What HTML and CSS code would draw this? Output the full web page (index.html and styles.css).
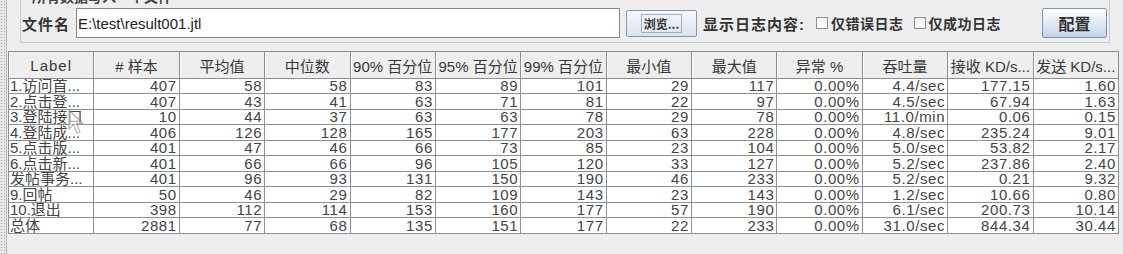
FILE: index.html
```html
<!DOCTYPE html>
<html lang="zh-CN">
<head>
    <meta charset="UTF-8">
    <title>聚合报告</title>
    <link rel="stylesheet" href="styles.css">
</head>
<body>
    <div class="window">
        <div class="grip"></div>
        <div class="main">
            <div class="file-panel">
                <span class="panel-title">所有数据写入一个文件</span>
                <label class="field-label" for="file">文件名</label>
                <input class="file-input" id="file" type="text" value="E:\test\result001.jtl">
                <button class="browse"><span>浏览...</span></button>
                <span class="log-label">显示日志内容:</span>
                <label class="check"><span class="box"></span>仅错误日志</label>
                <label class="check"><span class="box"></span>仅成功日志</label>
                <button class="config">配置</button>
            </div>

            <div class="table-wrap">
                <table class="report">
                    <thead>
                        <tr>
                            <th>Label</th>
                            <th># 样本</th>
                            <th>平均值</th>
                            <th>中位数</th>
                            <th>90% 百分位</th>
                            <th>95% 百分位</th>
                            <th>99% 百分位</th>
                            <th>最小值</th>
                            <th>最大值</th>
                            <th>异常 %</th>
                            <th>吞吐量</th>
                            <th>接收 KD/s...</th>
                            <th>发送 KD/s...</th>
                        </tr>
                    </thead>
                    <tbody>
                        <tr><td>1.访问首...</td><td>407</td><td>58</td><td>58</td><td>83</td><td>89</td><td>101</td><td>29</td><td>117</td><td>0.00%</td><td>4.4/sec</td><td>177.15</td><td>1.60</td></tr>
                        <tr><td>2.点击登...</td><td>407</td><td>43</td><td>41</td><td>63</td><td>71</td><td>81</td><td>22</td><td>97</td><td>0.00%</td><td>4.5/sec</td><td>67.94</td><td>1.63</td></tr>
                        <tr><td>3.登陆接口</td><td>10</td><td>44</td><td>37</td><td>63</td><td>63</td><td>78</td><td>29</td><td>78</td><td>0.00%</td><td>11.0/min</td><td>0.06</td><td>0.15</td></tr>
                        <tr><td>4.登陆成...</td><td>406</td><td>126</td><td>128</td><td>165</td><td>177</td><td>203</td><td>63</td><td>228</td><td>0.00%</td><td>4.8/sec</td><td>235.24</td><td>9.01</td></tr>
                        <tr><td>5.点击版...</td><td>401</td><td>47</td><td>46</td><td>66</td><td>73</td><td>85</td><td>23</td><td>104</td><td>0.00%</td><td>5.0/sec</td><td>53.82</td><td>2.17</td></tr>
                        <tr><td>6.点击新...</td><td>401</td><td>66</td><td>66</td><td>96</td><td>105</td><td>120</td><td>33</td><td>127</td><td>0.00%</td><td>5.2/sec</td><td>237.86</td><td>2.40</td></tr>
                        <tr><td>发帖事务...</td><td>401</td><td>96</td><td>93</td><td>131</td><td>150</td><td>190</td><td>46</td><td>233</td><td>0.00%</td><td>5.2/sec</td><td>0.21</td><td>9.32</td></tr>
                        <tr><td>9.回帖</td><td>50</td><td>46</td><td>29</td><td>82</td><td>109</td><td>143</td><td>23</td><td>143</td><td>0.00%</td><td>1.2/sec</td><td>10.66</td><td>0.80</td></tr>
                        <tr><td>10.退出</td><td>398</td><td>112</td><td>114</td><td>153</td><td>160</td><td>177</td><td>57</td><td>190</td><td>0.00%</td><td>6.1/sec</td><td>200.73</td><td>10.14</td></tr>
                        <tr><td>总体</td><td>2881</td><td>77</td><td>68</td><td>135</td><td>151</td><td>177</td><td>22</td><td>233</td><td>0.00%</td><td>31.0/sec</td><td>844.34</td><td>30.44</td></tr>
                    </tbody>
                </table>

                <!-- mouse pointer left in the capture -->
                <svg class="pointer" width="18" height="26" viewBox="0 0 18 26">
                    <path d="M1 1 L1 20 L5.5 15.5 L9 24 L12 22.7 L8.6 14.5 L15 14.5 Z" fill="#ffffff" stroke="#777" stroke-width="1.2" stroke-linejoin="round"/>
                </svg>
            </div>
        </div>
    </div>
</body>
</html>
```

FILE: styles.css
```css
body {
    margin: 0;
    background: #eeeeee;
    font-family: "Liberation Sans", "Noto Sans CJK SC", sans-serif;
    color: #333;
    overflow: hidden;
}

.window {
    display: flex;
    height: 254px;
}

.grip {
    width: 6px;
    flex: none;
    border-right: 1px solid #b4b4b4;
    background-color: #e8e8e8;
    background-image: radial-gradient(#a4a4a4 0.7px, transparent 0.9px);
    background-size: 3px 3px;
}

.main {
    flex: 1;
    padding-left: 1px;
}

/* top panel with the titled border */
.file-panel {
    position: relative;
    display: flex;
    align-items: center;
    height: 30px;
    margin: -2px 13px 0 12px;
    padding: 9px 0 4px 1px;
    border: 1px solid #c3cad2;
}

.panel-title {
    position: absolute;
    left: 8px;
    top: -10px;
    padding: 0 3px;
    background: #eeeeee;
    font-size: 14px;
    line-height: 16px;
    font-weight: bold;
    color: #444;
}

.field-label {
    width: 48px;
    font-size: 15px;
    font-weight: bold;
    letter-spacing: 1px;
    color: #333;
}

.file-input {
    width: 544px;
    height: 30px;
    box-sizing: border-box;
    margin-left: 6px;
    padding: 0 0 0 1px;
    border: 1px solid #7a8a9a;
    background: #fff;
    font-family: "Liberation Sans", sans-serif;
    font-size: 15px;
    color: #222;
}

.browse {
    width: 71px;
    height: 27px;
    margin-left: 6px;
    padding: 0;
    border: 1px solid #8798aa;
    border-radius: 2px;
    background: linear-gradient(#f6f8fb, #dbe4ee);
    font-family: "Noto Sans CJK SC", sans-serif;
    font-size: 12px;
    font-weight: bold;
    color: #333;
}

.browse span {
    display: inline-block;
    padding: 0 2px;
    line-height: 17px;
    border: 1px solid #a4acb8;
}

.log-label {
    margin-left: 6px;
    font-size: 15px;
    font-weight: bold;
    letter-spacing: 1px;
    color: #333;
}

.check {
    display: flex;
    align-items: center;
    margin-left: 11px;
    font-size: 14px;
    font-weight: bold;
    letter-spacing: 0.5px;
    color: #333;
}

.check + .check {
    margin-left: 10px;
}

.box {
    width: 10px;
    height: 10px;
    margin-right: 3px;
    border: 1px solid #8e9094;
    background: linear-gradient(#f4f4f4, #ffffff);
}

.config {
    width: 65px;
    height: 30px;
    margin-left: auto;
    margin-right: 2px;
    padding: 0;
    border: 1px solid #7f96ae;
    border-radius: 2px;
    background: linear-gradient(#ffffff, #c3d4e6);
    font-family: "Noto Sans CJK SC", sans-serif;
    font-size: 16px;
    font-weight: bold;
    color: #333;
}

/* results table */
.table-wrap {
    position: relative;
    margin-top: 8px;
}

.report {
    width: 1111px;
    table-layout: fixed;
    border-collapse: collapse;
    font-size: 15px;
}

.report th {
    height: 26px;
    padding: 0;
    border: 1px solid #8a8d93;
    background: #eeeeee;
    box-shadow: inset 1px 0 0 #ffffff;
    font-weight: normal;
    white-space: nowrap;
    overflow: hidden;
    color: #383838;
}

.report th:first-child {
    letter-spacing: 1px;
}

.report td {
    height: 14px;
    padding: 0 2px 0 0;
    border: 1px solid #8d9096;
    background: #fff;
    line-height: 14px;
    text-align: right;
    white-space: nowrap;
    overflow: hidden;
    letter-spacing: 0.6px;
    color: #444;
}

/* rows are 15.5px apart in the capture: alternate 15 / 16 */
.report tbody tr:nth-child(even) td {
    height: 15px;
}

.report td:first-child {
    padding: 0 0 0 1px;
    text-align: left;
    letter-spacing: 0;
    text-overflow: clip;
}

.pointer {
    position: absolute;
    left: 60px;
    top: 58px;
    opacity: 0.55;
}
```
